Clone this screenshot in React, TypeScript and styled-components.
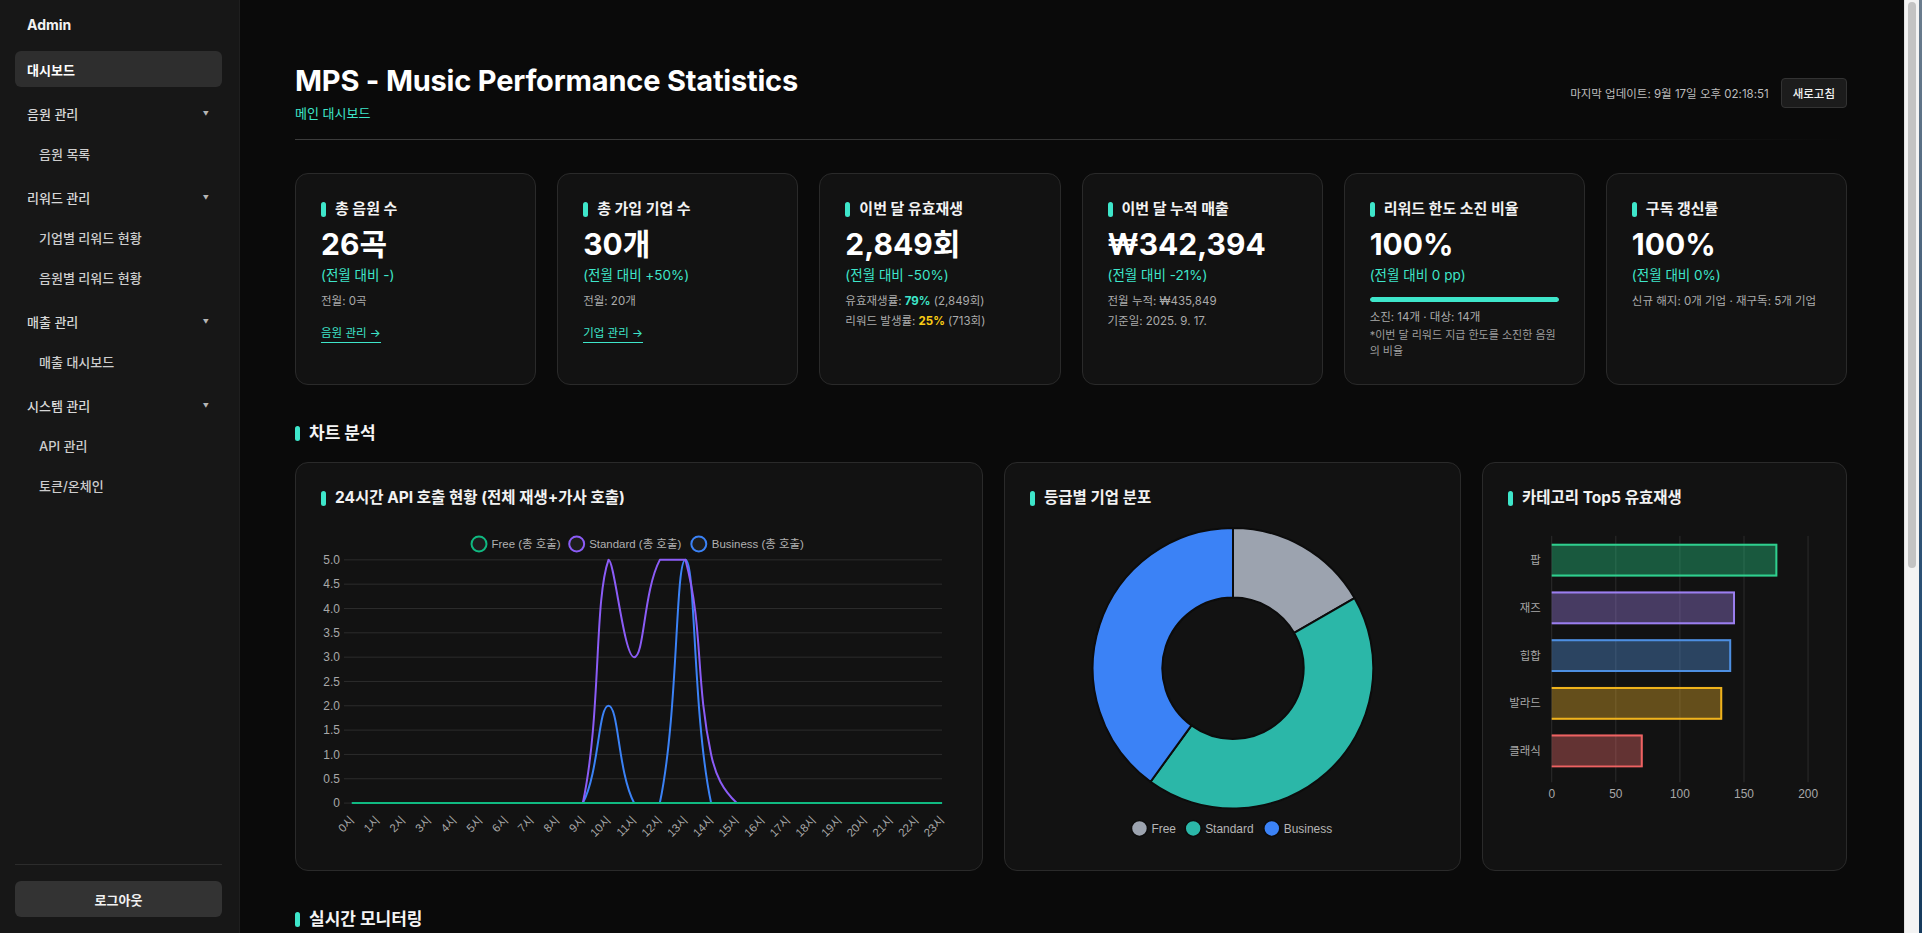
import React from 'react';
import styled, { createGlobalStyle } from 'styled-components';

const TEAL = '#3ee6ca';
const UI_FONT = 'Inter, "Noto Sans CJK KR", sans-serif';
const CHART_FONT = '"Liberation Sans", "Noto Sans CJK KR", sans-serif';

const GlobalStyle = createGlobalStyle`
  html, body { margin: 0; padding: 0; background: #0a0a0a; }
  body { font-family: ${UI_FONT}; color: #fff; -webkit-font-smoothing: antialiased; }
  *, *::before, *::after { box-sizing: border-box; }
`;

const Layout = styled.div`
  display: flex;
  height: 100vh;
  overflow: hidden;
  background: #0a0a0a;
`;

/* ---------------- Sidebar ---------------- */
const Sidebar = styled.aside`
  width: 240px;
  flex-shrink: 0;
  height: 100%;
  background: #171717;
  border-right: 1px solid #1f1f1f;
  display: flex;
  flex-direction: column;
  padding: 15px 17px 16px 15px;
`;
const Brand = styled.div`
  font-size: 14px;
  font-weight: 700;
  line-height: 20px;
  padding-left: 12px;
  color: #f2f2f2;
  margin-bottom: 16px;
`;
const Nav = styled.nav`
  flex: 1;
  display: flex;
  flex-direction: column;
  gap: 8px;
`;
const NavGroup = styled.div`
  display: flex;
  flex-direction: column;
  gap: 4px;
`;
const NavItem = styled.div<{ $active?: boolean; $sub?: boolean }>`
  height: 36px;
  display: flex;
  align-items: center;
  justify-content: space-between;
  padding: 0 12px 0 ${(p) => (p.$sub ? 24 : 12)}px;
  border-radius: 6px;
  font-size: 13px;
  font-weight: ${(p) => (p.$active ? 700 : 500)};
  color: ${(p) => (p.$active ? '#fff' : p.$sub ? '#cdcdcd' : '#d8d8d8')};
  background: ${(p) => (p.$active ? '#2e2e2e' : 'transparent')};
`;
const Caret = styled.span`
  font-size: 6px;
  color: #b5b5b5;
  margin-right: 1px;
`;
const SidebarFooter = styled.div`
  border-top: 1px solid #2c2c2c;
  padding-top: 16px;
`;
const LogoutButton = styled.button`
  width: 100%;
  height: 36px;
  border: none;
  border-radius: 6px;
  background: #333;
  color: #f2f2f2;
  font-family: ${UI_FONT};
  font-size: 13px;
  font-weight: 600;
`;

/* ---------------- Window scrollbar (as photographed) ---------------- */
const ScrollRail = styled.div`
  width: 15px;
  flex-shrink: 0;
  height: 100%;
  background: #f3f3f3;
  border-left: 1px solid #e1e1e1;
  padding: 2px 3px 0 3px;
`;
const ScrollThumb = styled.div`
  height: 566px;
  border-radius: 4px;
  background: #c3c3c3;
`;
const DesktopEdge = styled.div`
  width: 3px;
  flex-shrink: 0;
  height: 100%;
  background: linear-gradient(180deg, #6b7d8e 0%, #3f5b78 40%, #1f4a73 75%, #163a5c 100%);
`;

/* ---------------- Main ---------------- */
const Main = styled.main`
  flex: 1;
  min-width: 0;
  height: 100%;
  overflow-y: auto;
  padding: 63px 57px 48px 55px;
`;
const Header = styled.header`
  display: flex;
  justify-content: space-between;
  align-items: center;
  padding-bottom: 17px;
  border-bottom: 1px solid;
  border-image: linear-gradient(90deg, #3c3c3c 0%, #333 55%, rgba(40, 40, 40, 0) 100%) 1;
`;
const TitleBlock = styled.div`
  display: flex;
  flex-direction: column;
  gap: 5px;
`;
const PageTitle = styled.h1`
  margin: 0;
  font-size: 29px;
  line-height: 36px;
  font-weight: 700;
  letter-spacing: -0.2px;
  color: #fff;
`;
const PageSubtitle = styled.div`
  font-size: 13px;
  line-height: 18px;
  color: ${TEAL};
`;
const HeaderMeta = styled.div`
  display: flex;
  align-items: center;
  gap: 12px;
`;
const UpdatedAt = styled.span`
  font-size: 11.5px;
  color: #bdbdbd;
`;
const RefreshButton = styled.button`
  height: 30px;
  padding: 0 11px;
  background: #1c1c1c;
  border: 1px solid #333;
  border-radius: 4px;
  color: #f0f0f0;
  font-family: ${UI_FONT};
  font-size: 11.5px;
  font-weight: 500;
`;

const StatsGrid = styled.div`
  display: grid;
  grid-template-columns: repeat(6, 1fr);
  gap: 21px;
  margin-top: 33px;
`;
const Card = styled.div<{ $height: number }>`
  background: #121212;
  border: 1px solid #2a2a2a;
  border-radius: 13px;
  min-height: ${(p) => p.$height}px;
  padding: 25px 25px 24px;
  display: flex;
  flex-direction: column;
`;
const CardLabel = styled.div<{ $size?: number }>`
  display: flex;
  align-items: center;
  gap: 9px;
  font-size: ${(p) => p.$size ?? 15}px;
  line-height: 20px;
  font-weight: 700;
  color: #f2f2f2;
  white-space: nowrap;
  &::before {
    content: '';
    width: 5px;
    height: 15px;
    border-radius: 3px;
    background: ${TEAL};
    flex-shrink: 0;
  }
`;
const StatValue = styled.div`
  margin-top: 6px;
  font-size: 30px;
  line-height: 38px;
  font-weight: 700;
  color: #fff;
`;
const StatChange = styled.div`
  margin-top: 3px;
  font-size: 13.5px;
  line-height: 18px;
  color: ${TEAL};
`;
const StatMeta = styled.div<{ $gap?: number }>`
  margin-top: ${(p) => p.$gap ?? 7}px;
  font-size: 11.5px;
  line-height: 20px;
  color: #ababab;
`;
const MetaLine = styled.div`
  white-space: nowrap;
`;
const Highlight = styled.b<{ $color: string }>`
  color: ${(p) => p.$color};
  font-weight: 700;
`;
const StatNote = styled.div`
  font-size: 11px;
  line-height: 16px;
  color: #9d9d9d;
  white-space: nowrap;
`;
const StatLink = styled.a`
  align-self: flex-start;
  margin-top: 14px;
  font-size: 11.5px;
  line-height: 16px;
  color: ${TEAL};
  text-decoration: none;
  border-bottom: 1px solid ${TEAL};
  padding-bottom: 1px;
`;
const Progress = styled.div`
  margin-top: 13px;
  height: 5px;
  border-radius: 3px;
  background: #2a2a2a;
  overflow: hidden;
`;
const ProgressFill = styled.div`
  height: 100%;
  border-radius: 3px;
  background: ${TEAL};
`;

const Section = styled.section`
  margin-top: 37px;
`;
const SectionTitle = styled.h2`
  margin: 0;
  display: flex;
  align-items: center;
  gap: 9px;
  font-size: 17px;
  line-height: 22px;
  font-weight: 700;
  color: #f5f5f5;
  &::before {
    content: '';
    width: 5px;
    height: 15px;
    border-radius: 3px;
    background: ${TEAL};
  }
`;
const ChartGrid = styled.div`
  display: grid;
  grid-template-columns: 688fr 457fr 365fr;
  gap: 21px;
  margin-top: 18px;
`;
const ChartBody = styled.div`
  margin-top: 6px;
  svg { display: block; width: 100%; height: auto; overflow: visible; }
`;
const MonitorGrid = styled.div`
  display: grid;
  grid-template-columns: repeat(3, 1fr);
  gap: 21px;
  margin-top: 18px;
`;

/* ---------------- Charts ---------------- */
type P = { x: number; y: number };

function smoothPath(pts: P[], top: number, bottom: number, left: number, right: number) {
  const t = 0.4;
  const clampX = (v: number) => Math.max(left, Math.min(right, v));
  const clampY = (v: number) => Math.max(top, Math.min(bottom, v));
  const cps = pts.map((p, i) => {
    const prev = pts[i - 1] ?? p;
    const next = pts[i + 1] ?? p;
    const d01 = Math.hypot(p.x - prev.x, p.y - prev.y);
    const d12 = Math.hypot(next.x - p.x, next.y - p.y);
    let s01 = d01 / (d01 + d12);
    let s12 = d12 / (d01 + d12);
    if (isNaN(s01)) s01 = 0;
    if (isNaN(s12)) s12 = 0;
    const fa = t * s01;
    const fb = t * s12;
    return {
      prev: { x: clampX(p.x - fa * (next.x - prev.x)), y: clampY(p.y - fa * (next.y - prev.y)) },
      next: { x: clampX(p.x + fb * (next.x - prev.x)), y: clampY(p.y + fb * (next.y - prev.y)) },
    };
  });
  let d = `M${pts[0].x},${pts[0].y}`;
  for (let i = 1; i < pts.length; i++) {
    const a = cps[i - 1].next;
    const b = cps[i].prev;
    d += ` C${a.x.toFixed(2)},${a.y.toFixed(2)} ${b.x.toFixed(2)},${b.y.toFixed(2)} ${pts[i].x.toFixed(2)},${pts[i].y.toFixed(2)}`;
  }
  return d;
}

const hours = Array.from({ length: 24 }, (_, i) => i);
const zeros = (n: number) => Array.from({ length: n }, () => 0);
const freeData = zeros(24);
const standardData = [...zeros(10), 5, 3, 5, 5, 1, ...zeros(9)];
const businessData = [...zeros(10), 2, 0, 0, 5, ...zeros(10)];

function ApiLineChart() {
  const L = 31, R = 623, T = 46, B = 290;
  const xOf = (i: number) => L + (i * (R - L)) / 23;
  const yOf = (v: number) => B - (v * (B - T)) / 5;
  const series = [
    { label: 'Business (총 호출)', color: '#3b82f6', data: businessData },
    { label: 'Standard (총 호출)', color: '#8b5cf6', data: standardData },
    { label: 'Free (총 호출)', color: '#10b981', data: freeData },
  ];
  const legend = [
    { label: 'Free (총 호출)', color: '#10b981', cx: 158.5, tx: 171 },
    { label: 'Standard (총 호출)', color: '#8b5cf6', cx: 256.5, tx: 269 },
    { label: 'Business (총 호출)', color: '#3b82f6', cx: 379, tx: 392 },
  ];
  const ticks = [5, 4.5, 4, 3.5, 3, 2.5, 2, 1.5, 1, 0.5, 0];
  return (
    <svg viewBox="0 0 638 330" width={638} height={330} fontFamily={CHART_FONT}>
      {legend.map((l) => (
        <g key={l.label}>
          <circle cx={l.cx} cy={30} r={7.5} fill="#1d1d1d" stroke={l.color} strokeWidth={2} />
          <text x={l.tx} y={30} dy="0.36em" fontSize={11.5} fill="#b0b0b0">{l.label}</text>
        </g>
      ))}
      {ticks.map((v) => (
        <g key={v}>
          <line x1={23} x2={R} y1={yOf(v)} y2={yOf(v)} stroke="#2c2c2c" strokeWidth={1} />
          <text x={19} y={yOf(v)} dy="0.35em" textAnchor="end" fontSize={12} fill="#a8a8a8">
            {v === 0 ? '0' : v.toFixed(1)}
          </text>
        </g>
      ))}
      {hours.map((h) => (
        <text
          key={h}
          x={xOf(h) + 3}
          y={308}
          textAnchor="end"
          fontSize={11.5}
          fill="#a8a8a8"
          transform={`rotate(-45 ${xOf(h) + 3} 308)`}
        >
          {h}시
        </text>
      ))}
      {series.map((s) => (
        <path
          key={s.label}
          d={smoothPath(s.data.map((v, i) => ({ x: xOf(i), y: yOf(v) })), T, B, L, R)}
          fill="none"
          stroke={s.color}
          strokeWidth={2}
          strokeLinejoin="round"
        />
      ))}
    </svg>
  );
}

function polar(cx: number, cy: number, r: number, deg: number) {
  const a = ((deg - 90) * Math.PI) / 180;
  return [cx + r * Math.cos(a), cy + r * Math.sin(a)];
}
function ringSlice(cx: number, cy: number, R: number, r: number, a0: number, a1: number) {
  const large = a1 - a0 > 180 ? 1 : 0;
  const [x0, y0] = polar(cx, cy, R, a0);
  const [x1, y1] = polar(cx, cy, R, a1);
  const [x2, y2] = polar(cx, cy, r, a1);
  const [x3, y3] = polar(cx, cy, r, a0);
  return `M${x0} ${y0} A${R} ${R} 0 ${large} 1 ${x1} ${y1} L${x2} ${y2} A${r} ${r} 0 ${large} 0 ${x3} ${y3} Z`;
}

const tiers = [
  { label: 'Free', value: 5, color: '#9ca3af', cx: 110, tx: 122 },
  { label: 'Standard', value: 13, color: '#2bb7a8', cx: 164, tx: 176 },
  { label: 'Business', value: 12, color: '#3b82f6', cx: 243, tx: 255 },
];

function TierDonut() {
  const total = tiers.reduce((s, t) => s + t.value, 0);
  let acc = 0;
  return (
    <svg viewBox="0 0 407 330" width={407} height={330} fontFamily={CHART_FONT}>
      {tiers.map((t) => {
        const a0 = (acc / total) * 360;
        acc += t.value;
        const a1 = (acc / total) * 360;
        return (
          <path key={t.label} d={ringSlice(204, 155, 141, 71, a0, a1)} fill={t.color} stroke="#0c0c0c" strokeWidth={2} />
        );
      })}
      {tiers.map((t) => (
        <g key={t.label + 'l'}>
          <circle cx={t.cx} cy={316} r={8} fill={t.color} stroke="#0c0c0c" strokeWidth={1.5} />
          <text x={t.tx} y={316} dy="0.36em" fontSize={12} fill="#b5b5b5">{t.label}</text>
        </g>
      ))}
    </svg>
  );
}

const categories = [
  { label: '팝', value: 176, fill: 'rgba(38,198,130,0.4)', stroke: '#2fcf8e' },
  { label: '재즈', value: 143, fill: 'rgba(153,123,220,0.4)', stroke: '#9b7ff0' },
  { label: '힙합', value: 140, fill: 'rgba(83,145,218,0.4)', stroke: '#4d8fe2' },
  { label: '발라드', value: 133, fill: 'rgba(225,170,43,0.4)', stroke: '#f0b31c' },
  { label: '클래식', value: 71, fill: 'rgba(223,103,103,0.4)', stroke: '#ee6262' },
];

function CategoryBars() {
  const x0 = 44;
  const scale = 258 / 200;
  const grid = [0, 50, 100, 150, 200];
  return (
    <svg viewBox="0 0 315 330" width={315} height={330} fontFamily={CHART_FONT}>
      {grid.map((g) => (
        <g key={g}>
          <line x1={x0 + g * scale} x2={x0 + g * scale} y1={22} y2={270} stroke="#2c2c2c" strokeWidth={1} />
          <text x={x0 + g * scale} y={282} dy="0.36em" textAnchor="middle" fontSize={12} fill="#a8a8a8">{g}</text>
        </g>
      ))}
      {categories.map((c, i) => {
        const top = 30 + i * 48;
        const w = c.value * scale;
        return (
          <g key={c.label}>
            <rect x={x0} y={top} width={w} height={33} fill={c.fill} />
            <path
              d={`M${x0} ${top + 1} H${x0 + w - 1} V${top + 32} H${x0}`}
              fill="none"
              stroke={c.stroke}
              strokeWidth={2}
            />
            <text x={33} y={top + 16.5} dy="0.36em" textAnchor="end" fontSize={11.5} fill="#a8a8a8">{c.label}</text>
          </g>
        );
      })}
    </svg>
  );
}

/* ---------------- App ---------------- */
export default function App() {
  return (
    <>
      <GlobalStyle />
      <Layout>
        <Sidebar>
          <Brand>Admin</Brand>
          <Nav>
            <NavItem $active>대시보드</NavItem>
            <NavGroup>
              <NavItem>음원 관리<Caret>▼</Caret></NavItem>
              <NavItem $sub>음원 목록</NavItem>
            </NavGroup>
            <NavGroup>
              <NavItem>리워드 관리<Caret>▼</Caret></NavItem>
              <NavItem $sub>기업별 리워드 현황</NavItem>
              <NavItem $sub>음원별 리워드 현황</NavItem>
            </NavGroup>
            <NavGroup>
              <NavItem>매출 관리<Caret>▼</Caret></NavItem>
              <NavItem $sub>매출 대시보드</NavItem>
            </NavGroup>
            <NavGroup>
              <NavItem>시스템 관리<Caret>▼</Caret></NavItem>
              <NavItem $sub>API 관리</NavItem>
              <NavItem $sub>토큰/온체인</NavItem>
            </NavGroup>
          </Nav>
          <SidebarFooter>
            <LogoutButton>로그아웃</LogoutButton>
          </SidebarFooter>
        </Sidebar>

        <Main>
          <Header>
            <TitleBlock>
              <PageTitle>MPS - Music Performance Statistics</PageTitle>
              <PageSubtitle>메인 대시보드</PageSubtitle>
            </TitleBlock>
            <HeaderMeta>
              <UpdatedAt>마지막 업데이트: 9월 17일 오후 02:18:51</UpdatedAt>
              <RefreshButton>새로고침</RefreshButton>
            </HeaderMeta>
          </Header>

          <StatsGrid>
            <Card $height={212}>
              <CardLabel>총 음원 수</CardLabel>
              <StatValue>26곡</StatValue>
              <StatChange>(전월 대비 -)</StatChange>
              <StatMeta>전월: 0곡</StatMeta>
              <StatLink href="#">음원 관리 →</StatLink>
            </Card>
            <Card $height={212}>
              <CardLabel>총 가입 기업 수</CardLabel>
              <StatValue>30개</StatValue>
              <StatChange>(전월 대비 +50%)</StatChange>
              <StatMeta>전월: 20개</StatMeta>
              <StatLink href="#">기업 관리 →</StatLink>
            </Card>
            <Card $height={212}>
              <CardLabel>이번 달 유효재생</CardLabel>
              <StatValue>2,849회</StatValue>
              <StatChange>(전월 대비 -50%)</StatChange>
              <StatMeta>
                <MetaLine>유효재생률: <Highlight $color={TEAL}>79%</Highlight> (2,849회)</MetaLine>
                <MetaLine>리워드 발생률: <Highlight $color="#facc15">25%</Highlight> (713회)</MetaLine>
              </StatMeta>
            </Card>
            <Card $height={212}>
              <CardLabel>이번 달 누적 매출</CardLabel>
              <StatValue>₩342,394</StatValue>
              <StatChange>(전월 대비 -21%)</StatChange>
              <StatMeta>
                <MetaLine>전월 누적: ₩435,849</MetaLine>
                <MetaLine>기준일: 2025. 9. 17.</MetaLine>
              </StatMeta>
            </Card>
            <Card $height={212}>
              <CardLabel>리워드 한도 소진 비율</CardLabel>
              <StatValue>100%</StatValue>
              <StatChange>(전월 대비 0 pp)</StatChange>
              <Progress>
                <ProgressFill style={{ width: '100%' }} />
              </Progress>
              <StatMeta $gap={5}>
                <MetaLine>소진: 14개 · 대상: 14개</MetaLine>
                <StatNote>*이번 달 리워드 지급 한도를 소진한 음원</StatNote>
                <StatNote>의 비율</StatNote>
              </StatMeta>
            </Card>
            <Card $height={212}>
              <CardLabel>구독 갱신률</CardLabel>
              <StatValue>100%</StatValue>
              <StatChange>(전월 대비 0%)</StatChange>
              <StatMeta>신규 해지: 0개 기업 · 재구독: 5개 기업</StatMeta>
            </Card>
          </StatsGrid>

          <Section>
            <SectionTitle>차트 분석</SectionTitle>
            <ChartGrid>
              <Card $height={409}>
                <CardLabel $size={15.5}>24시간 API 호출 현황 (전체 재생+가사 호출)</CardLabel>
                <ChartBody><ApiLineChart /></ChartBody>
              </Card>
              <Card $height={409}>
                <CardLabel $size={15.5}>등급별 기업 분포</CardLabel>
                <ChartBody><TierDonut /></ChartBody>
              </Card>
              <Card $height={409}>
                <CardLabel $size={15.5}>카테고리 Top5 유효재생</CardLabel>
                <ChartBody><CategoryBars /></ChartBody>
              </Card>
            </ChartGrid>
          </Section>

          <Section>
            <SectionTitle>실시간 모니터링</SectionTitle>
            <MonitorGrid>
              <Card $height={520} />
              <Card $height={520} />
              <Card $height={520} />
            </MonitorGrid>
          </Section>
        </Main>
        <ScrollRail>
          <ScrollThumb />
        </ScrollRail>
        <DesktopEdge />
      </Layout>
    </>
  );
}
